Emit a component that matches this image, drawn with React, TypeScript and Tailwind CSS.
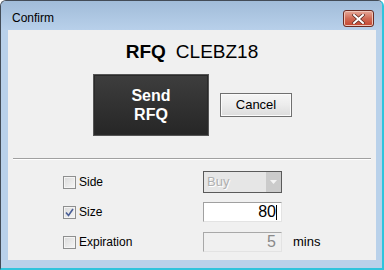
import React from "react";

const font = { fontFamily: '"Liberation Sans", Arial, sans-serif' };

const CheckBox: React.FC<{ checked?: boolean; label: string }> = ({ checked, label }) => (
  <label className="flex items-center gap-[3px] text-[12px] text-black">
    <span className="relative w-[13px] h-[13px] border border-[#8e8f8f] bg-gradient-to-br from-[#dadada] to-[#f6f6f6] shadow-[inset_0_0_0_1px_#f4f4f4] flex items-center justify-center">
      {checked && (
        <svg width="9" height="9" viewBox="0 0 9 9">
          <path d="M1 4.5 L3.5 7.5 L8 1" fill="none" stroke="#4a5f97" strokeWidth="1.6" />
        </svg>
      )}
    </span>
    {label}
  </label>
);

const App: React.FC = () => {
  return (
    <div className="w-[384px] h-[270px]" style={font}>
      <div className="w-[384px] h-[270px] flex flex-col rounded-t-[6px] border-t border-l border-[#434c57] border-r-2 border-b-2 border-r-[#2fc4dc] border-b-[#2fc4dc] bg-[#b9d1ea] overflow-hidden">
        {/* Title bar */}
        <div className="h-[29px] shrink-0 flex items-start justify-between pl-[11px] pr-[8px] bg-gradient-to-b from-[#a1bcd9] to-[#b8d0ea]">
          <span className="mt-[10px] text-[12px] leading-[14px] text-black">Confirm</span>
          <button className="mt-[9px] w-[31px] h-[17px] rounded-[3px] border border-[#6b2b22] bg-gradient-to-b from-[#e6a999] via-[#d06a55] to-[#c4442e] flex items-center justify-center shadow-[inset_0_0_0_1px_#eec4b8]">
            <svg width="13" height="10" viewBox="0 0 13 10">
              <path d="M2 1 L11 9 M11 1 L2 9" stroke="#5a2a22" strokeWidth="3.4" strokeLinecap="square" />
              <path d="M2 1 L11 9 M11 1 L2 9" stroke="#ffffff" strokeWidth="2" strokeLinecap="square" />
            </svg>
          </button>
        </div>

        {/* Content */}
        <div className="flex-1 ml-[7px] mr-[6px] mb-[8px] bg-[#f0f0f0] flex flex-col">
          <div className="mt-[11px] flex justify-center gap-[10px] text-[19px] leading-[22px] text-black">
            <span className="font-bold">RFQ</span>
            <span>CLEBZ18</span>
          </div>

          <div className="mt-[11px] flex items-center justify-center gap-[11px] pl-[1px]">
            <button className="w-[116px] h-[62px] border border-[#555555] bg-gradient-to-b from-[#3e3e3e] to-[#262626] shadow-[inset_0_0_0_1px_#2a2a2a] text-white font-bold text-[16px] leading-[19px]">
              Send
              <br />
              RFQ
            </button>
            <button className="w-[72px] h-[24px] border border-[#707070] bg-gradient-to-b from-[#f6f6f6] via-[#ececec] to-[#dcdcdc] shadow-[inset_0_0_0_1px_#fbfbfb] text-[13px] text-black">
              Cancel
            </button>
          </div>

          <div className="mt-[22px] mx-[5px] h-px bg-[#a0a0a0] border-b border-white box-content" />

          <div className="mt-[7px] ml-[55px] grid grid-cols-[140px_auto] auto-rows-[30px] items-center">
            <CheckBox label="Side" />
            <div className="w-[79px] h-[22px] border border-[#5a5a5a] flex bg-[#e6e6e6]">
              <span className="flex-1 pl-[3px] text-[13px] leading-[20px] text-[#b0b0b0] [text-shadow:1px_1px_0_#ffffff]">
                Buy
              </span>
              <span className="w-[15px] bg-[#cbcbcb] flex items-center justify-center">
                <svg width="7" height="4" viewBox="0 0 7 4">
                  <path d="M0 0 H7 L3.5 4 Z" fill="#f4f4f4" />
                </svg>
              </span>
            </div>

            <CheckBox checked label="Size" />
            <div className="w-[79px] h-[20px] border border-[#a0a0a0] border-b-[#e3e3e3] border-r-[#e3e3e3] bg-white flex items-center justify-end pr-[4px]">
              <span className="text-[16px] leading-[18px] text-black">80</span>
              <span className="w-px h-[15px] bg-black" />
            </div>

            <CheckBox label="Expiration" />
            <div className="flex items-center gap-[11px]">
              <div className="w-[79px] h-[20px] border border-[#a8a8a8] border-b-[#e3e3e3] border-r-[#e3e3e3] bg-[#f0f0f0] flex items-center justify-end pr-[5px]">
                <span className="text-[16px] leading-[18px] text-[#8a8a8a]">5</span>
              </div>
              <span className="text-[13px] text-black">mins</span>
            </div>
          </div>
        </div>
      </div>
    </div>
  );
};

export default App;
